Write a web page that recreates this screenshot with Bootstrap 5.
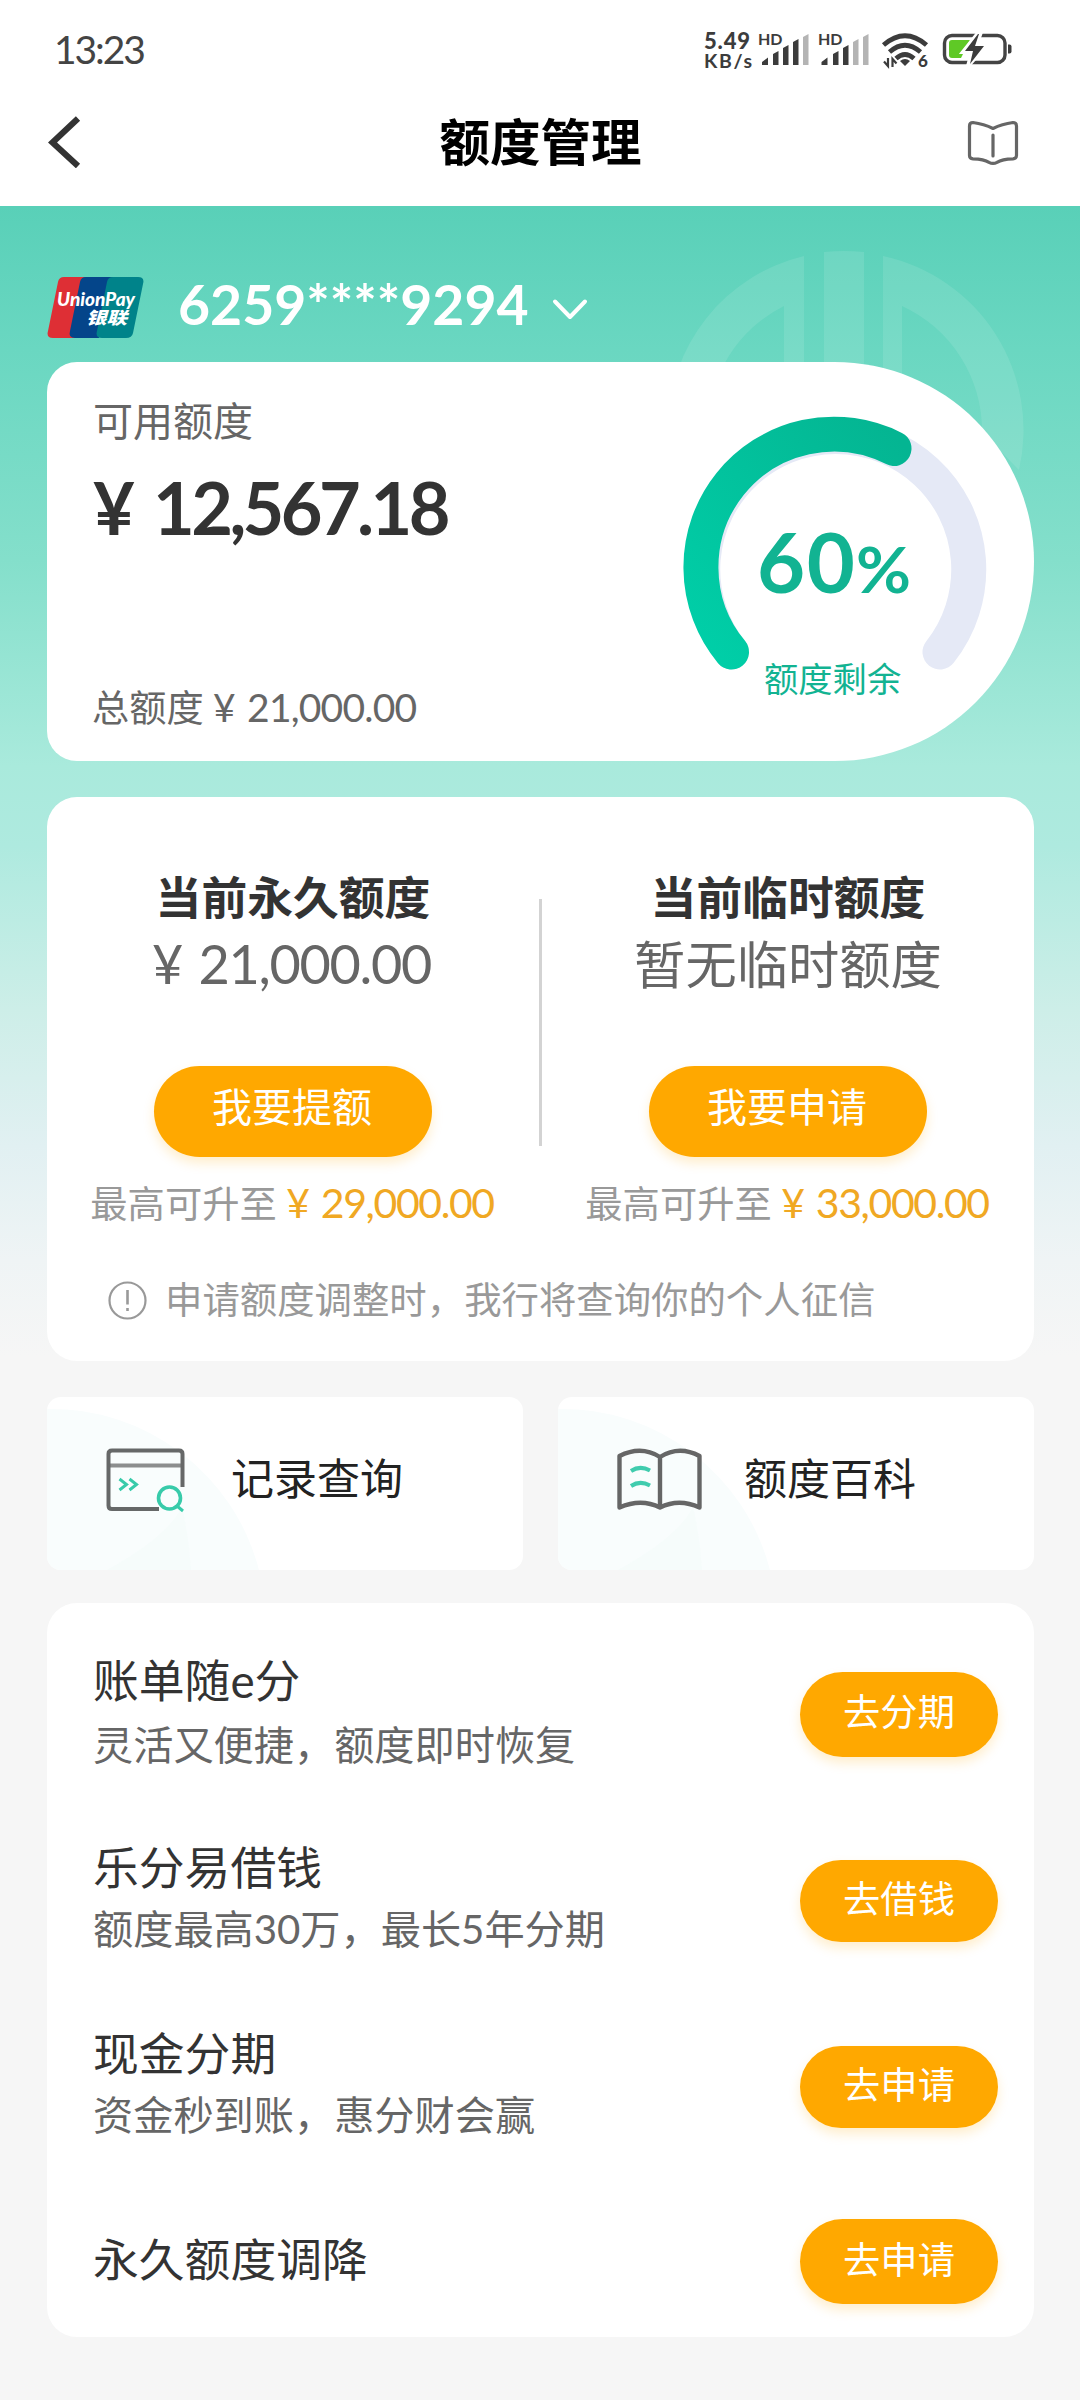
<!DOCTYPE html>
<html lang="zh-CN">
<head>
<meta charset="utf-8">
<meta name="viewport" content="width=device-width, initial-scale=1">
<title>额度管理</title>
<link href="https://cdn.jsdelivr.net/npm/bootstrap@5.3.0/dist/css/bootstrap.min.css" rel="stylesheet">
<style>
  body { width: 1080px; height: 2400px; overflow: hidden; background: #f6f6f6; color: #333; font-family: Lato, "Noto Sans CJK SC", sans-serif; }
  svg { display: block; flex: none; }
  .statusbar { height: 84px; padding: 13px 64px 0 54px; }
  .statusbar svg { overflow: visible; }
  .clock { font-size: 39px; line-height: 72px; letter-spacing: -2.1px; color: #444; }
  .titlebar { height: 122px; padding: 0 61px 6px 48px; }
  .titlebar h1 { font-size: 50.5px; line-height: 70px; color: #000; padding-left: 14px; }
  .page-bg { height: 2194px; padding: 0 46px 0 47px; background: linear-gradient(#59d0b8 0, #6ad7c1 144px, #84dfcb 354px, #a9eadc 560px, #aeeadf 640px, #cdeee8 804px, #e1f0f2 940px, #eff4f5 1054px, #f6f6f6 1150px); }
  .emblem { position: absolute; left: 660px; top: 246px; }
  .card-select { height: 156px; padding-top: 71px; position: relative; }
  .card-no { font-size: 55.3px; line-height: 60px; margin: -3px 0 0 34px; color: #fff; }
  .panel { border: 0; border-radius: 30px; background: #fff; position: relative; }
  .quota { height: 399px; border-radius: 30px 200px 200px 30px; padding: 29px 42px 31px 46px; }
  .t40 { font-size: 40px; line-height: 60px; }
  .c6 { color: #666; }
  .c9 { color: #999; }
  .amount { font-size: 72px; line-height: 80px; margin-top: 16px; letter-spacing: -3.6px; word-spacing: 8px; white-space: nowrap; }
  .total { font-size: 37.2px; line-height: 44px; margin-left: -1px; }
  .total .num { font-size: 39px; letter-spacing: -.8px; word-spacing: 3px; }
  .adjust { height: 564px; margin-top: 36px; padding-top: 71px; }
  .half { width: 492px; }
  .half h2 { font-size: 45.8px; line-height: 60px; margin: 0; }
  .cur { font-size: 51.3px; line-height: 70px; margin-top: 1px; }
  .cur.num { font-size: 54px; letter-spacing: -1.3px; word-spacing: 4px; margin-left: -3px; }
  .btn-go { --bs-btn-bg: #ffa800; --bs-btn-color: #fff; background: #ffa800; color: #fff; border: 0; border-radius: 50px; box-shadow: 0 6px 12px rgba(255,168,0,.2); padding: 0; line-height: 50px; }
  .btn-big { width: 278px; height: 91px; margin-top: 67px; padding: 0 2px 10px 0; font-size: 40px; }
  .cap-line { font-size: 37.3px; line-height: 50px; margin: 21px 0 0 -2px; white-space: nowrap; }
  .cap-line .num { font-size: 41px; letter-spacing: -1.4px; word-spacing: 3px; color: #f0a823; }
  .rule { width: 3px; height: 247px; margin-top: 31px; background: #d3d3d3; }
  .note { margin: 46px 0 0 61px; font-size: 37.4px; line-height: 50px; gap: 18px; }
  .tiles { margin-top: 36px; gap: 35px; }
  .tile { width: 476px; height: 173px; border-radius: 14px; background: #fff; position: relative; overflow: hidden; font-size: 43px; color: #222; padding-bottom: 8px; }
  .tile-glow { position: absolute; left: 0; top: 0; }
  .tile svg.pic, .tile span { position: relative; }
  .offers { height: 734px; margin-top: 33px; padding: 18px 36px 0 46px; }
  .offer { height: 186.5px; }
  .offer.last-row { height: 151px; margin-top: 5.5px; }
  .offer h3 { font-size: 45.8px; line-height: 61px; margin: 0 0 3px; font-weight: 400; }
  .offer p { font-size: 40.2px; line-height: 61px; margin: 0 0 4px; color: #666; }
  .offer .lift { margin-bottom: 2px; }
  .offer.last-row h3 { margin-bottom: 5px; }
  .offer .btn-go { width: 198px; height: 82px; font-size: 37.3px; padding-bottom: 4px; }
  .offer .btn-tall { height: 85px; }
</style>
</head>
<body>
<header class="bg-white">
  <div class="statusbar d-flex justify-content-between align-items-start">
    <div class="clock">13:23</div>
    <svg width="316" height="44" viewBox="700 28 316 44" style="margin-top:15px" font-family="Lato, sans-serif" font-weight="700" fill="#3c3c3c">
      <text x="704" y="48.500" font-size="22" textLength="46" font-weight="900">5.49</text>
      <text x="704" y="67.500" font-size="19.500" textLength="48">KB/s</text>
      <text x="758" y="45" font-size="16" textLength="24.500">HD</text>
      <path d="M762 65v-3l6-4.500v7.500zM773 65v-11l5.500-3v14zM783 65v-17l5.500-3v20zM793 65v-23l5.500-3v26z"/>
      <path fill="#b4b4b4" d="M803 65v-28l5.500-3v31z"/>
      <text x="818" y="45" font-size="16" textLength="24.500">HD</text>
      <path d="M821.500 65v-3l6-4.500v7.500zM833 65v-11l5.500-3v14zM843 65v-17l5.500-3v20z"/>
      <path fill="#b4b4b4" d="M853 65v-23l5.500-3v26zM863 65v-28l5.500-3v31z"/>
      <g fill="none" stroke="#3c3c3c" stroke-width="4.800">
        <path d="M883.500 45Q905 26.500 926.500 45"/><path d="M889.500 52Q905 38.500 920.500 52"/><path d="M896 58.500Q905 50.500 914 58.500"/>
      </g>
      <path d="M900 61q5-4 10 0l-5 5z"/>
      <path d="M888 58v8l-4-4.500M892.500 67v-8l4 4.500" fill="none" stroke="#3c3c3c" stroke-width="2.200"/>
      <text x="918" y="67" font-size="17" font-weight="900">6</text>
      <rect x="944.500" y="35.500" width="60.500" height="27" rx="7.500" fill="none" stroke="#444" stroke-width="3.400"/>
      <path d="M1008 44.500h1.500a2 2 0 0 1 2 2v5a2 2 0 0 1-2 2h-1.500z"/>
      <path fill="#5fc926" d="M952 40h18l-9 18h-9a3 3 0 0 1-3-3V43a3 3 0 0 1 3-3z"/>
      <path d="M979 32L963 52h9l-4 14 18-20h-10l5-14z" stroke="#fff" stroke-width="4" fill="#fff"/>
      <path d="M978 34L965 51h8l-3 13 14-18h-9l4-12z"/>
    </svg>
  </div>
  <nav class="titlebar d-flex justify-content-between align-items-center">
    <svg width="52" height="52" viewBox="48 116 52 52"><path d="M78 118.500L52.500 142.500 78 166" fill="none" stroke="#333" stroke-width="6.200"/></svg>
    <h1 class="fw-bold my-0">额度管理</h1>
    <svg width="52" height="48" viewBox="967 118 52 48" fill="none" stroke="#666" stroke-width="3.200" stroke-linejoin="round" stroke-linecap="round"><path d="M993 128.500Q984 124 973 122.500Q969.500 122.500 969.500 126V155.500Q969.500 158.500 973 158.800Q984 159 989 162.300Q993 164.500 997 162.300Q1002 159 1013 158.800Q1016.500 158.500 1016.500 155.500V126Q1016.500 122.500 1013 122.500Q1002 124 993 128.500ZM993 135v21"/></svg>
  </nav>
</header>

<main class="page-bg">
  <svg class="emblem" width="370" height="370" viewBox="660 246 370 370" fill="#fff" fill-opacity=".1">
    <path d="M804 256A177 177 0 0 0 668 428H708A137 137 0 0 1 784 306V428H804ZM883 256A178 178 0 0 1 1019 470L982 432A137 137 0 0 0 902 306V428H883ZM824 252q20-2 40 0V428H824Z"/>
  </svg>
  <div class="card-select d-flex">
    <svg width="97" height="61" viewBox="0 0 97 61">
      <path fill="#de2f35" d="M16 0H45L30 61H6Q-1 61 1 54L11 5Q12 0 17 0Z"/>
      <path fill="#04458a" d="M40 0H68L52 61H28Q21 61 23 54L33 5Q34 0 39 0Z"/>
      <path fill="#00838a" d="M65 0H91Q98 0 96 7L86 56Q85 61 79 61H55Q48 61 50 54L60 5Q61 0 66 0Z"/>
      <g fill="#fff" font-style="italic" font-weight="900">
        <text x="10" y="29" font-family="Lato, sans-serif" font-size="18" textLength="78" lengthAdjust="spacingAndGlyphs">UnionPay</text>
        <text x="39" y="46.500" font-family="'Noto Sans CJK SC', sans-serif" font-size="17" textLength="41" lengthAdjust="spacingAndGlyphs">银联</text>
      </g>
    </svg>
    <div class="card-no fw-bold">6259****9294</div>
    <svg width="40" height="28" viewBox="550 296 40 28" style="margin:19px 0 0 21px"><path d="M555 301.500L570 317 585 301.500" fill="none" stroke="#fff" stroke-width="4" stroke-linecap="round" stroke-linejoin="round"/></svg>
  </div>

  <section class="panel quota d-flex justify-content-between">
    <div class="d-flex flex-column">
      <div class="t40 c6">可用额度</div>
      <div class="amount fw-bold">¥ 12,567.18</div>
      <div class="total c6 mt-auto">总额度 <span class="num">¥ 21,000.00</span></div>
    </div>
    <svg width="312" height="290" viewBox="680 412 312 290" style="margin-top:22px">
      <defs><linearGradient id="arc" x1="0" y1="1" x2="1" y2="0"><stop offset="0" stop-color="#00cfa8"/><stop offset="1" stop-color="#04b592"/></linearGradient></defs>
      <g fill="none" stroke-width="35" stroke-linecap="round">
        <path stroke="#e5e9f6" d="M731.500 651A133 133 0 1 1 940 651"/>
        <path stroke="url(#arc)" d="M731.500 651A133 133 0 0 1 894 447.500"/>
      </g>
      <g fill="#12b392" font-family="Lato, 'Noto Sans CJK SC', sans-serif">
        <text x="757" y="592" font-size="83" font-weight="700" textLength="98">60</text>
        <text x="856" y="592" font-size="64" font-weight="700" textLength="55" lengthAdjust="spacingAndGlyphs">%</text>
        <text x="764" y="690.500" font-size="34.300">额度剩余</text>
      </g>
    </svg>
  </section>

  <section class="panel adjust">
    <div class="d-flex">
      <div class="half d-flex flex-column align-items-center">
        <h2 class="fw-bold">当前永久额度</h2>
        <div class="cur num c6">¥ 21,000.00</div>
        <button class="btn btn-go btn-big">我要提额</button>
        <div class="cap-line c9">最高可升至 <span class="num">¥ 29,000.00</span></div>
      </div>
      <div class="rule"></div>
      <div class="half d-flex flex-column align-items-center">
        <h2 class="fw-bold">当前临时额度</h2>
        <div class="cur c6">暂无临时额度</div>
        <button class="btn btn-go btn-big">我要申请</button>
        <div class="cap-line c9">最高可升至 <span class="num">¥ 33,000.00</span></div>
      </div>
    </div>
    <div class="note c9 d-flex align-items-center">
      <svg width="39" height="39" viewBox="0 0 39 39" fill="none" stroke="#999"><circle cx="19.500" cy="19.500" r="18" stroke-width="2.200"/><path d="M19.500 9v14.500M19.500 27v3" stroke-width="2.600"/></svg>
      <span>申请额度调整时，我行将查询你的个人征信</span>
    </div>
  </section>

  <div class="tiles d-flex">
    <div class="tile d-flex align-items-center">
      <svg class="tile-glow" width="220" height="173"><path fill="#f9fdfd" d="M0 12A215 215 0 0 1 212 173H0Z"/><path fill="#f3fbfa" fill-opacity=".6" d="M60 173Q120 140 135 110Q142 140 144 173Z"/></svg>
      <svg class="pic" width="84" height="66" viewBox="104 1450 84 66" style="margin-left:57px" fill="none">
        <path d="M108 1468.500H182" stroke="#8c8e8e" stroke-width="4"/>
        <path d="M159 1512H112Q108.500 1512 108.500 1508.500V1457Q108.500 1453.500 112 1453.500H179Q182.500 1453.500 182.500 1457V1490" stroke="#666868" stroke-width="4"/>
        <g stroke="#38cbaa"><path d="M119.500 1482l7 5.500-7 5.500M129.500 1482l7 5.500-7 5.500" stroke-width="3"/><circle cx="169.500" cy="1501" r="11" stroke-width="3.600"/><path d="M177 1509l6 5" stroke-width="3"/></g>
      </svg>
      <span style="margin-left:43px">记录查询</span>
    </div>
    <div class="tile d-flex align-items-center">
      <svg class="tile-glow" width="220" height="173"><path fill="#f9fdfd" d="M0 12A215 215 0 0 1 212 173H0Z"/><path fill="#f3fbfa" fill-opacity=".6" d="M60 173Q120 140 135 110Q142 140 144 173Z"/></svg>
      <svg class="pic" width="88" height="66" viewBox="615 1449 88 66" style="margin-left:57px" fill="none" stroke="#666" stroke-width="4.400" stroke-linejoin="round">
        <path d="M660 1459Q641 1447 619.500 1458V1509.500Q641 1500 660 1509.500ZM660 1459Q679 1447 699.500 1458V1509.500Q679 1500 660 1509.500Z"/>
        <path d="M631 1473Q640 1467 650 1472.500M631 1488Q640 1482 650 1487.500" stroke="#40ccae" stroke-width="4"/>
      </svg>
      <span style="margin-left:41px">额度百科</span>
    </div>
  </div>

  <section class="panel offers">
    <div class="offer d-flex justify-content-between align-items-center">
      <div><h3>账单随e分</h3><p>灵活又便捷，额度即时恢复</p></div>
      <button class="btn btn-go btn-tall">去分期</button>
    </div>
    <div class="offer d-flex justify-content-between align-items-center">
      <div class="lift"><h3 class="mb-0">乐分易借钱</h3><p>额度最高30万，最长5年分期</p></div>
      <button class="btn btn-go">去借钱</button>
    </div>
    <div class="offer d-flex justify-content-between align-items-center">
      <div class="lift"><h3 class="mb-0">现金分期</h3><p>资金秒到账，惠分财会赢</p></div>
      <button class="btn btn-go">去申请</button>
    </div>
    <div class="offer last-row d-flex justify-content-between align-items-center">
      <h3>永久额度调降</h3>
      <button class="btn btn-go btn-tall">去申请</button>
    </div>
  </section>
</main>
<script src="https://cdn.jsdelivr.net/npm/bootstrap@5.3.0/dist/js/bootstrap.bundle.min.js"></script>
</body>
</html>
